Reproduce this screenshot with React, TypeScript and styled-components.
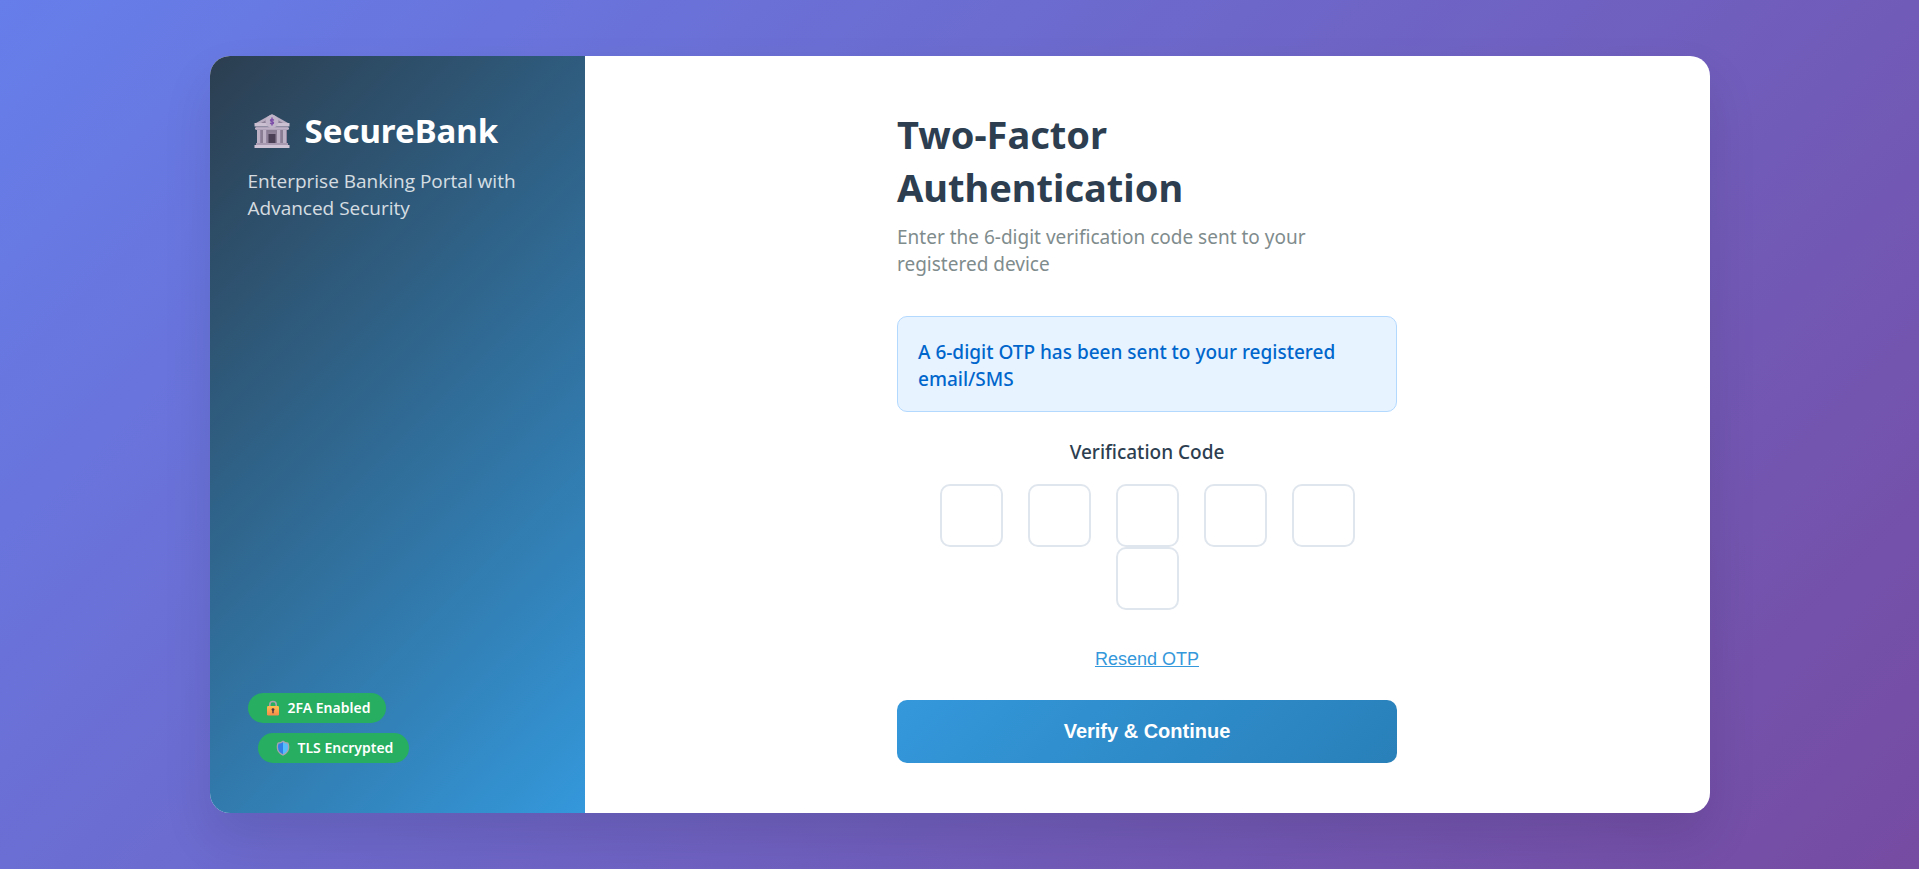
import React, { useRef, useState } from "react";
import styled, { createGlobalStyle } from "styled-components";

const GlobalStyle = createGlobalStyle`
  *, *::before, *::after { box-sizing: border-box; }
  body {
    margin: 0;
    font-family: "Segoe UI", "Noto Sans", "Open Sans", sans-serif;
    font-size: 19px;
    line-height: 27px;
    color: #2c3e50;
  }
`;

const Page = styled.div`
  min-height: 100vh;
  display: flex;
  align-items: center;
  justify-content: center;
  padding: 25px;
  background: linear-gradient(135deg, #667eea 0%, #764ba2 100%);
`;

const Card = styled.div`
  width: 100%;
  max-width: 1500px;
  display: grid;
  grid-template-columns: 1fr 3fr;
  background: #ffffff;
  border-radius: 20px;
  overflow: hidden;
  box-shadow: 0 25px 50px rgba(0, 0, 0, 0.1);

  @media (max-width: 900px) {
    grid-template-columns: 1fr;
  }
`;

const Sidebar = styled.aside`
  display: flex;
  flex-direction: column;
  justify-content: space-between;
  gap: 40px;
  padding: 50px 38px;
  color: #ffffff;
  background: linear-gradient(135deg, #2c3e50 0%, #3498db 100%);
`;

const Brand = styled.div`
  display: flex;
  align-items: center;
  gap: 13px;
  padding-left: 4px;
  margin-bottom: 12px;
  font-size: 33px;
  font-weight: 700;
  line-height: 50px;
`;

const BankGlyph = styled.svg`
  width: 40px;
  height: 36px;
`;

const Tagline = styled.p`
  margin: 0;
  font-family: "Segoe UI", "Open Sans", sans-serif;
  opacity: 0.8;
`;

const Badges = styled.div`
  display: flex;
  flex-direction: column;
  align-items: flex-start;
  gap: 10px;
`;

const Badge = styled.span<{ $indented?: boolean }>`
  display: inline-flex;
  align-items: center;
  gap: 8px;
  height: 30px;
  padding: 0 16px 0 18px;
  margin-left: ${(p) => (p.$indented ? 10 : 0)}px;
  border-radius: 15px;
  background: #27ae60;
  font-size: 14px;
  font-weight: 600;
  line-height: 20px;
`;

const BadgeGlyph = styled.svg`
  width: 14px;
  height: 16px;
`;

const Main = styled.main`
  display: flex;
  justify-content: center;
  padding: 52px 50px 50px;
`;

const Form = styled.form`
  width: 100%;
  max-width: 500px;
`;

const Title = styled.h1`
  margin: 0 0 10px;
  font-size: 38px;
  font-weight: 700;
  line-height: 53px;
`;

const Subtitle = styled.p`
  margin: 0 0 38px;
  color: #7f8c8d;
`;

const Notice = styled.div`
  margin-bottom: 27px;
  padding: 22px 20px 18px;
  border: 1px solid #b3d9ff;
  border-radius: 10px;
  background: #e7f3ff;
  color: #0066cc;
  font-weight: 500;
`;

const CodeGroup = styled.fieldset`
  margin: 0;
  padding: 0;
  border: 0;
  min-width: 0;
`;

const CodeLegend = styled.legend`
  width: 100%;
  padding: 0;
  margin-bottom: 18px;
  font-weight: 500;
  text-align: center;
`;

const Digits = styled.div`
  display: flex;
  flex-wrap: wrap;
  justify-content: center;
  column-gap: 25px;
`;

const Digit = styled.input`
  width: 63px;
  height: 63px;
  padding: 0;
  border: 2px solid #e0e6ed;
  border-radius: 10px;
  outline: none;
  background: #ffffff;
  color: inherit;
  font-family: inherit;
  font-size: 30px;
  font-weight: 600;
  text-align: center;

  &:focus { border-color: #3498db; }
`;

const ResendRow = styled.div`
  display: flex;
  justify-content: center;
  margin: 36px 0 27px;
`;

const ResendButton = styled.button`
  padding: 0;
  border: 0;
  background: none;
  color: #3498db;
  font-family: Arial, "Liberation Sans", sans-serif;
  font-size: 18px;
  line-height: 27px;
  text-decoration: underline;
  cursor: pointer;
`;

const SubmitButton = styled.button`
  width: 100%;
  height: 63px;
  border: 0;
  border-radius: 10px;
  background: linear-gradient(135deg, #3498db 0%, #2980b9 100%);
  color: #ffffff;
  font-family: Arial, "Liberation Sans", sans-serif;
  font-size: 20px;
  font-weight: 600;
  cursor: pointer;
`;

function BankIcon() {
  return (
    <BankGlyph viewBox="0 0 40 36" aria-hidden="true">
      <path d="M20 1 36 10v2H4v-2z" fill="#b9adc1" />
      <path d="M20 4 31 10H9z" fill="#8c7f98" />
      <path d="M2.500 10h35v3.500h-35z" fill="#cbc0d1" />
      <path d="M4 13.500h32V17H4z" fill="#a497ae" />
      <path d="M3 14.500h34v2H3z" fill="#beb2c6" />
      <path d="M5 17h30v14H5z" fill="#8a7e95" />
      <path d="M5 17h4v14H5zM11 17h4v14h-4zM25 17h4v14h-4zM31 17h4v14h-4z" fill="#bdb1c5" />
      <path d="M8 17h1v14H8zM14 17h1v14h-1zM28 17h1v14h-1zM34 17h1v14h-1z" fill="#9587a1" />
      <path d="M15.500 19.500h9V31h-9z" fill="#8f8299" />
      <path d="M16.500 21h7v9h-7z" fill="#4a3f55" />
      <path d="M4 30h32v2H4z" fill="#a89bb1" />
      <path d="M2.500 32h35v3h-35z" fill="#cfc4d5" />
      <circle cx="20" cy="8.500" r="6.500" fill="#c1b6c9" />
      <path
        d="M20 5v7M21.500 7c-.8-.8-3-.7-3 .5s3 1 3 2.200-2.200 1.300-3 .5"
        fill="none"
        stroke="#7d4fa8"
        strokeWidth="1.400"
        strokeLinecap="round"
      />
    </BankGlyph>
  );
}

function LockIcon() {
  return (
    <BadgeGlyph viewBox="0 0 14 16" aria-hidden="true">
      <defs>
        <linearGradient id="lockBody" x1="0" y1="0" x2="0" y2="1">
          <stop offset="0" stopColor="#ffc04d" />
          <stop offset="1" stopColor="#f58a4b" />
        </linearGradient>
      </defs>
      <path d="M3.800 7.500V4.700a3.200 3.200 0 0 1 6.400 0v2.800" fill="none" stroke="#a9a3ad" strokeWidth="1.600" />
      <rect x="1" y="6" width="12" height="9.500" rx="1.200" fill="url(#lockBody)" />
      <circle cx="7" cy="9.600" r="1.400" fill="#4a3440" />
      <path d="M6.300 10h1.400v3.200H6.300z" fill="#4a3440" />
    </BadgeGlyph>
  );
}

function ShieldIcon() {
  return (
    <BadgeGlyph viewBox="0 0 14 16" aria-hidden="true">
      <path d="M7 .5c1.600 1.300 3.300 1.800 5.200 2 .7 1 1.100 2.600 1.100 4.500 0 4.400-2.400 7-6.300 8.700C3.100 14 .7 11.400.7 7c0-1.900.4-3.500 1.100-4.500 1.900-.2 3.600-.7 5.200-2z" fill="#a7a3b0" />
      <path d="M7 2C5.700 3 4.300 3.500 2.600 3.700 2.200 4.600 2 5.700 2 7c0 3.600 1.800 5.800 5 7.300z" fill="#2f7fe6" />
      <path d="M7 2c1.300 1 2.700 1.500 4.400 1.700.4.900.6 2 .6 3.300 0 3.600-1.800 5.800-5 7.300z" fill="#55bdfb" />
    </BadgeGlyph>
  );
}

export default function App() {
  const [code, setCode] = useState<string[]>(Array(6).fill(""));
  const inputs = useRef<(HTMLInputElement | null)[]>([]);

  const updateDigit = (index: number, value: string) => {
    const digit = value.replace(/\D/g, "").slice(-1);
    setCode((prev) => prev.map((d, i) => (i === index ? digit : d)));
    if (digit) inputs.current[index + 1]?.focus();
  };

  return (
    <>
      <GlobalStyle />
      <Page>
        <Card>
          <Sidebar>
            <div>
              <Brand>
                <BankIcon />
                SecureBank
              </Brand>
              <Tagline>Enterprise Banking Portal with Advanced Security</Tagline>
            </div>
            <Badges>
              <Badge>
                <LockIcon />
                2FA Enabled
              </Badge>
              <Badge $indented>
                <ShieldIcon />
                TLS Encrypted
              </Badge>
            </Badges>
          </Sidebar>
          <Main>
            <Form onSubmit={(e) => e.preventDefault()}>
              <Title>
                Two-Factor
                <br />
                Authentication
              </Title>
              <Subtitle>Enter the 6-digit verification code sent to your registered device</Subtitle>
              <Notice role="status">A 6-digit OTP has been sent to your registered email/SMS</Notice>
              <CodeGroup>
                <CodeLegend>Verification Code</CodeLegend>
                <Digits>
                  {code.map((digit, i) => (
                    <Digit
                      key={i}
                      ref={(el) => {
                        inputs.current[i] = el;
                      }}
                      type="text"
                      inputMode="numeric"
                      maxLength={1}
                      aria-label={`Digit ${i + 1}`}
                      value={digit}
                      onChange={(e) => updateDigit(i, e.target.value)}
                    />
                  ))}
                </Digits>
              </CodeGroup>
              <ResendRow>
                <ResendButton type="button">Resend OTP</ResendButton>
              </ResendRow>
              <SubmitButton type="submit">Verify &amp; Continue</SubmitButton>
            </Form>
          </Main>
        </Card>
      </Page>
    </>
  );
}
